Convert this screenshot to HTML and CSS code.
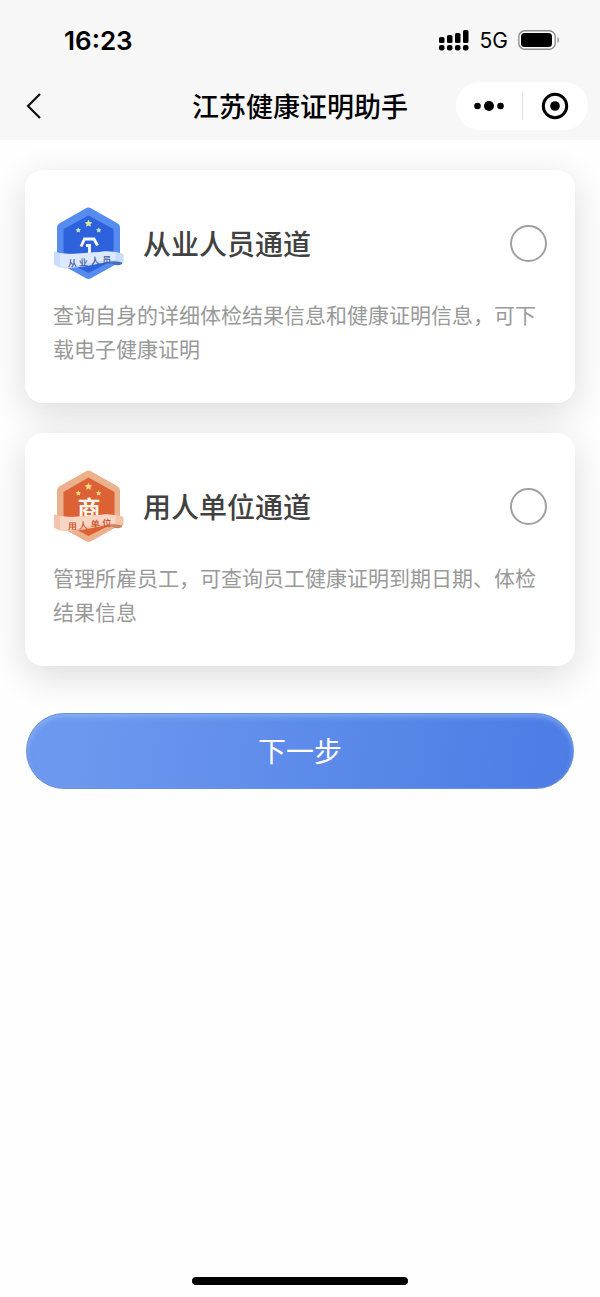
FILE: index.html
```html
<!DOCTYPE html>
<html lang="zh-CN">
<head>
<meta charset="utf-8">
<meta name="viewport" content="width=device-width, initial-scale=1">
<title>江苏健康证明助手</title>
<link rel="stylesheet" href="styles.css">
</head>
<body>
<header class="top">
  <div class="status">
    <span class="time">16:23</span>
    <div class="status-right">
      <svg class="signal" viewBox="0 0 32 22" aria-hidden="true">
        <rect x="1" y="8" width="5.500" height="6" rx="1.500"/><rect x="9" y="6" width="5.500" height="8" rx="1.500"/><rect x="17" y="4" width="5.500" height="10" rx="1.500"/><rect x="25" y="1" width="5.500" height="13" rx="1.500"/>
        <rect x="1" y="16" width="5.500" height="5.500" rx="2"/><rect x="9" y="16" width="5.500" height="5.500" rx="2"/><rect x="17" y="16" width="5.500" height="5.500" rx="2"/><rect x="25" y="16" width="5.500" height="5.500" rx="2"/>
      </svg>
      <span class="network">5G</span>
      <svg class="battery" viewBox="0 0 42 20" aria-hidden="true">
        <rect x="0.8" y="0.8" width="36.4" height="18.4" rx="6" fill="#fff" stroke="#8d8d8d" stroke-width="1.400"/>
        <rect x="3" y="3" width="31" height="14" rx="3.500"/>
        <path d="M39.500 7v6c2-1 2-5 0-6z" fill="#8d8d8d"/>
      </svg>
    </div>
  </div>
  <nav class="nav">
    <button class="back" type="button" aria-label="返回">
      <svg viewBox="0 0 16 28"><path d="M14 2L2 14l12 12" fill="none" stroke="#111" stroke-width="2.200"/></svg>
    </button>
    <h1 class="nav-title">江苏健康证明助手</h1>
    <div class="capsule">
      <button class="capsule-button" type="button" aria-label="更多">
        <svg class="more" viewBox="0 0 30 12"><circle cx="3.500" cy="6" r="3.300"/><circle cx="15" cy="6" r="5"/><circle cx="26.500" cy="6" r="3.300"/></svg>
      </button>
      <button class="capsule-button" type="button" aria-label="关闭">
        <svg class="target" viewBox="0 0 28 28"><circle cx="14" cy="14" r="11.700" fill="none" stroke="#000" stroke-width="3"/><circle cx="14" cy="14" r="4.800"/></svg>
      </button>
    </div>
  </nav>
</header>
<main class="content">
  <form class="form">
    <section class="card">
      <div class="card-head">
        <svg class="badge" viewBox="13 12 72 72" aria-hidden="true">
          <path d="M46 13.200q2.500-1.400 5 0L77 28q3 1.700 3 5v31q0 3-3 4.700L51 83.300q-2.500 1.400-5 0L20 68.700q-3-1.700-3-4.700V33q0-3.300 3-5z" fill="#568bef"/>
          <path d="M48.500 20.500L73.500 34v31L48.500 78 23.500 65V34z" fill="#2e62dc"/>
          <path d="M48.500 24.800l1.200 2.300 2.600.4-1.900 1.700.5 2.600-2.400-1.200-2.400 1.200.5-2.600-1.900-1.700 2.600-.4z" fill="#d9ee9b"/>
          <g fill="#c5e6ce">
            <path d="M38.300 32.500l.9 1.600 1.800.3-1.300 1.300.3 1.900-1.700-.9-1.700.9.300-1.900-1.300-1.300 1.800-.3z"/>
            <path d="M58.700 32.500l.9 1.600 1.800.3-1.300 1.300.3 1.900-1.700-.9-1.700.9.300-1.900-1.300-1.300 1.800-.3z"/>
          </g>
          <path d="M41 51.500l3.500-7.500h9.500l3.500 6.500M46 50.500h3.500V62" fill="none" stroke="#fff" stroke-width="2.800"/>
          <path d="M72 63l10-1v7q-5 3-11-1z" fill="#476fb8"/>
          <path d="M14 56q8 4 24 2.500t30-2q10 0 15.500 2.500v9q-7-3-19-.5-23 5-36 5.500-10 .5-14.500-3.500z" fill="#c9dcfb"/>
          <path d="M20 58.300q18 2.200 45-2l11 1-1 8q-14-.5-27 3t-28 4z" fill="#dce9ff"/>
          <g class="ribbon-text" fill="#3c5792"><text x="28" y="71.500" transform="rotate(-1 28 70)">从</text><text x="39" y="71" transform="rotate(-3 39 70)">业</text><text x="51" y="69.500" transform="rotate(-5 51 69)">人</text><text x="62.500" y="68.500" transform="rotate(-3 62 68)">员</text></g>
        </svg>
        <label class="card-title" for="worker">从业人员通道</label>
        <input class="radio" type="radio" name="channel" id="worker" aria-describedby="worker-info">
      </div>
      <p class="card-text" id="worker-info">查询自身的详细体检结果信息和健康证明信息，可下载电子健康证明</p>
    </section>
    <section class="card">
      <div class="card-head">
        <svg class="badge" viewBox="13 12 72 72" aria-hidden="true">
          <path d="M46 13.200q2.500-1.400 5 0L77 28q3 1.700 3 5v31q0 3-3 4.700L51 83.300q-2.500 1.400-5 0L20 68.700q-3-1.700-3-4.700V33q0-3.300 3-5z" fill="#ebb08c"/>
          <path d="M48.500 19.500L74.500 34v31L48.500 78 23.500 65V34z" fill="#dc6236"/>
          <g fill="#ffd77e">
            <path d="M48.500 24.800l1.200 2.300 2.600.4-1.900 1.700.5 2.600-2.400-1.200-2.400 1.200.5-2.600-1.900-1.700 2.600-.4z"/>
            <path d="M38.300 32.500l.9 1.600 1.800.3-1.300 1.300.3 1.900-1.700-.9-1.700.9.300-1.900-1.300-1.300 1.800-.3z"/>
            <path d="M58.700 32.500l.9 1.600 1.800.3-1.300 1.300.3 1.900-1.700-.9-1.700.9.300-1.900-1.300-1.300 1.800-.3z"/>
          </g>
          <text class="badge-mark" x="49" y="59" text-anchor="middle" fill="#fff8ee">商</text>
          <path d="M72 63l10-1v7q-5 3-11-1z" fill="#c98265"/>
          <path d="M14 56q8 4 24 2.500t30-2q10 0 15.500 2.500v9q-7-3-19-.5-23 5-36 5.500-10 .5-14.500-3.500z" fill="#f2c4aa"/>
          <path d="M20 58.300q18 2.200 45-2l11 1-1 8q-14-.5-27 3t-28 4z" fill="#f9d6c4"/>
          <g class="ribbon-text" fill="#c4512c"><text x="28" y="71.500" transform="rotate(-1 28 70)">用</text><text x="39" y="71" transform="rotate(-3 39 70)">人</text><text x="51" y="69.500" transform="rotate(-5 51 69)">单</text><text x="62.500" y="68.500" transform="rotate(-3 62 68)">位</text></g>
        </svg>
        <label class="card-title" for="employer">用人单位通道</label>
        <input class="radio" type="radio" name="channel" id="employer" aria-describedby="employer-info">
      </div>
      <p class="card-text" id="employer-info">管理所雇员工，可查询员工健康证明到期日期、体检结果信息</p>
    </section>
    <button class="next" type="button">下一步</button>
  </form>
</main>
<footer class="home"><div class="home-bar"></div></footer>
</body>
</html>
```

FILE: styles.css
```css
* {
  box-sizing: border-box;
}

body {
  display: flex;
  flex-direction: column;
  min-height: 100vh;
  margin: 0;
  background: #fefefe;
  color: #000;
  font-family: "Noto Sans CJK SC", sans-serif;
}

button {
  padding: 0;
  border: 0;
  background: none;
  font: inherit;
}

svg {
  display: block;
}

.top {
  background: #f7f7f7;
}

.status {
  display: flex;
  align-items: center;
  justify-content: space-between;
  height: 72px;
  padding: 8px 40px 0 64px;
  font-family: Inter, sans-serif;
}

.time {
  font-size: 26px;
  font-weight: 600;
}

.status-right {
  display: flex;
  align-items: center;
  gap: 10px;
}

.signal {
  width: 32px;
  height: 22px;
}

.network {
  font-size: 21px;
}

.battery {
  width: 42px;
  height: 20px;
}

.nav {
  display: grid;
  grid-template-columns: 132px 1fr 132px;
  align-items: center;
  height: 68px;
  padding: 0 12px;
}

.back {
  justify-self: start;
  padding-left: 14px;
}

.back svg {
  width: 16px;
  height: 28px;
}

.nav-title {
  margin: 0;
  font-size: 27px;
  font-weight: 500;
  line-height: 40px;
  text-align: center;
}

.capsule {
  display: flex;
  height: 48px;
  border-radius: 24px;
  background: #fff;
}

.capsule-button {
  display: flex;
  flex: 1;
  align-items: center;
  justify-content: center;
}

.capsule-button + .capsule-button {
  position: relative;
}

.capsule-button + .capsule-button::before {
  position: absolute;
  top: 10px;
  bottom: 10px;
  left: 0;
  width: 1px;
  background: #e2e2e2;
  content: "";
}

.more {
  width: 30px;
  height: 12px;
}

.target {
  width: 28px;
  height: 28px;
}

.content {
  padding: 30px 25px;
}

.form {
  display: flex;
  flex-direction: column;
  gap: 30px;
}

.card {
  padding: 37px 28px 38px;
  border-radius: 18px;
  background: #fff;
  box-shadow: 0 10px 36px rgba(0, 0, 0, 0.14);
}

.card-head {
  display: flex;
  align-items: center;
  margin-bottom: 18px;
}

.badge {
  width: 72px;
  height: 72px;
}

.ribbon-text {
  font-size: 9px;
  font-weight: 500;
}

.badge-mark {
  font-size: 23px;
  font-weight: 700;
}

.card-title {
  flex: 1;
  margin-left: 18px;
  color: #414141;
  font-size: 28px;
  font-weight: 500;
  line-height: 40px;
}

.radio {
  width: 37px;
  height: 37px;
  margin: 0;
  border: 2px solid #a0a0a0;
  border-radius: 50%;
  appearance: none;
}

.radio:checked {
  border: 10px solid #4d7fe5;
}

.card-text {
  margin: 0;
  color: #999;
  font-size: 21px;
  line-height: 34px;
}

.next {
  height: 76px;
  margin: 17px 1px 0;
  padding-bottom: 2px;
  border: 1px solid #6791d8;
  border-radius: 38px;
  background: linear-gradient(100deg, #6d98ef 10%, #4d7de5 95%);
  box-shadow: inset 0 3px 5px rgba(160, 200, 250, 0.5);
  color: #fff;
  font-size: 28px;
  font-weight: 400;
}

.home {
  display: flex;
  justify-content: center;
  margin-top: auto;
  padding-bottom: 12px;
}

.home-bar {
  width: 36%;
  height: 8px;
  border-radius: 4px;
  background: #000;
}
```
